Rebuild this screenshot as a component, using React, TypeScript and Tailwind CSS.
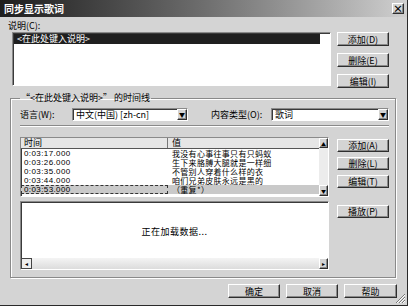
const ROWS = [
  { t: '0:03:17.000', v: '我没有心事往事只有只蚂蚁' },
  { t: '0:03:26.000', v: '生下来胳膊大腿就是一样细' },
  { t: '0:03:35.000', v: '不管别人穿着什么样的衣' },
  { t: '0:03:44.000', v: '咱们兄弟皮肤永远是黑的' },
  { t: '0:03:53.000', v: '（重复*）' },
];

const RAISED =
  'flex items-center justify-center bg-[#d4d4d4] border border-t-white border-l-white border-r-[#2e2e2e] border-b-[#2e2e2e] shadow-[inset_-1px_-1px_0_#8a8a8a] leading-none text-black';
const SUNKEN =
  'bg-white border border-t-[#8a8a8a] border-l-[#8a8a8a] border-r-white border-b-white shadow-[inset_1px_1px_0_#3a3a3a]';

function Btn({ label, className = '' }: { label: string; className?: string }) {
  return <div className={RAISED + ' text-[9px] ' + className}>{label}</div>;
}

function Combo({ value, w }: { value: string; w: string }) {
  return (
    <div className={SUNKEN + ' flex items-stretch h-[13px] ' + w}>
      <div className="flex-1 pl-[3px] leading-[11px] text-[9px]">{value}</div>
      <div className={RAISED + ' w-[10px] text-[6px]'}>▼</div>
    </div>
  );
}

export default function App() {
  return (
    <div className="w-[408px] h-[306px] relative overflow-hidden bg-[#d4d4d4] border-r border-b border-[#2a2a2a] text-[9px] text-black font-['Noto_Sans_CJK_SC','Liberation_Sans',sans-serif]">
      {/* title bar */}
      <div className="h-[17px] flex items-center justify-between pl-[4px] pr-[3px] bg-linear-to-r from-[#1e1e1e] via-[#6e6e6e] to-[#d0d0d0]">
        <span className="text-white font-bold text-[10px] leading-none">同步显示歌词</span>
        <div className={RAISED + ' w-[12px] h-[11px] text-[10px] font-bold'}>×</div>
      </div>

      <div className="pl-[8px] pt-[4px] h-[15px] leading-[10px]">说明(C):</div>

      <div className="flex pl-[12px] gap-[6px]">
        <div className={SUNKEN + ' w-[319px] h-[54px] pt-[1px] pl-[1px]'}>
          <div className="w-[306px] h-[10px] bg-[#1f1f1f] text-white pl-[3px] leading-[10px]">&lt;在此处键入说明&gt;</div>
        </div>
        <div className="flex flex-col gap-[7px]">
          <Btn label="添加(D)" className="w-[52px] h-[14px]" />
          <Btn label="删除(E)" className="w-[52px] h-[14px]" />
          <Btn label="编辑(I)" className="w-[52px] h-[14px]" />
        </div>
      </div>

      <fieldset className="ml-[10px] mt-[5px] w-[386px] h-[185px] border border-[#8a8a8a] shadow-[inset_1px_1px_0_white,1px_1px_0_white] pl-[9px] pr-[6px]">
        <legend className="px-[1px] leading-[10px]">“&lt;在此处键入说明&gt;” 的时间线</legend>

        <div className="flex items-center mt-[5px] h-[13px]">
          <span className="w-[52px]">语言(W):</span>
          <Combo value="中文(中国) [zh-cn]" w="w-[116px]" />
          <span className="ml-[23px] w-[60px]">内容类型(O):</span>
          <Combo value="歌词" w="w-[118px]" />
        </div>

        <div className="mt-[4px] h-[2px] border-t border-[#8a8a8a] border-b border-b-white" />

        <div className="flex gap-[8px] mt-[10px]">
          <div className="w-[309px] flex flex-col gap-[4px]">
            {/* grid */}
            <div className={SUNKEN + ' h-[60px] flex'}>
              <div className="flex-1 flex flex-col">
                <div className="h-[11px] flex bg-[#e6e6e6] border-b border-[#555]">
                  <div className="w-[147px] pl-[3px] leading-[10px] border-r border-[#777]">时间</div>
                  <div className="flex-1 pl-[4px] leading-[10px]">值</div>
                </div>
                {ROWS.map((r, i) => (
                  <div key={r.t} className={'h-[9px] flex leading-[9px] text-[8px] ' + (i === ROWS.length - 1 ? 'bg-[#c9c9c9]' : '')}>
                    <div className={"w-[147px] pl-[3px] tracking-[0.4px] font-['Liberation_Sans',sans-serif] " + (i === ROWS.length - 1 ? 'outline-1 outline-dashed outline-[#333] -outline-offset-1' : '')}>{r.t}</div>
                    <div className="flex-1 pl-[4px] whitespace-nowrap tracking-[0.3px]">{r.v}</div>
                  </div>
                ))}
              </div>
              <div className="w-[9px] flex flex-col bg-[#ececec]">
                <div className={RAISED + ' h-[10px] text-[5px]'}>▲</div>
                <div className="flex-1" />
                <div className={RAISED + ' h-[11px] text-[5px]'}>▼</div>
              </div>
            </div>

            {/* lower pane */}
            <div className={SUNKEN + ' h-[69px] flex flex-col'}>
              <div className="flex-1 flex items-center justify-center pt-[3px] tracking-[0.5px]">正在加载数据...</div>
              <div className="h-[11px] flex justify-between bg-linear-to-b from-[#f4f4f4] to-[#dcdcdc]">
                <div className="w-[11px] h-[11px] border border-[#444] bg-[#eee] flex items-center justify-center text-[6px]">◂</div>
                <div className={RAISED + ' w-[9px] h-[11px] text-[6px]'}>▸</div>
              </div>
            </div>
          </div>

          <div className="flex flex-col pt-[2px]">
            <Btn label="添加(A)" className="w-[52px] h-[13px]" />
            <Btn label="删除(L)" className="w-[52px] h-[13px] mt-[5px]" />
            <Btn label="编辑(T)" className="w-[52px] h-[13px] mt-[5px]" />
            <Btn label="播放(P)" className="w-[52px] h-[13px] mt-[17px]" />
          </div>
        </div>
      </fieldset>

      <div className="flex justify-end gap-[6px] pr-[10px] mt-[6px]">
        <Btn label="确定" className="w-[52px] h-[14px]" />
        <Btn label="取消" className="w-[52px] h-[14px]" />
        <Btn label="帮助" className="w-[53px] h-[14px]" />
      </div>

      {/* size grip */}
      <svg className="absolute right-[1px] bottom-[1px]" width="11" height="11" viewBox="0 0 11 11">
        <path d="M10 1L1 10M10 4L4 10M10 7L7 10" stroke="#7a7a7a" strokeWidth="1" />
        <path d="M10 2L2 10M10 5L5 10M10 8L8 10" stroke="#ffffff" strokeWidth="1" />
      </svg>
    </div>
  );
}
